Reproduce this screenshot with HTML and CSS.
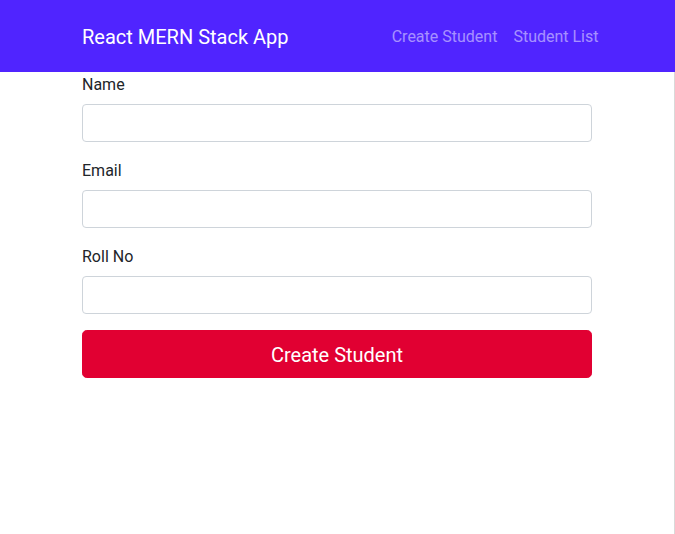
FILE: index.html
```html
<!DOCTYPE html>
<html lang="en">
<head>
<meta charset="utf-8">
<title>React MERN Stack App</title>
<link rel="stylesheet" href="styles.css">
</head>
<body>
<header class="navbar">
  <div class="nav-inner">
    <a class="brand" href="#">React MERN Stack App</a>
    <nav class="links">
      <a class="nav-link" href="#">Create Student</a>
      <a class="nav-link" href="#">Student List</a>
    </nav>
  </div>
</header>
<main class="page">
  <div class="container">
    <form class="form">
      <div class="group">
        <label class="label">Name</label>
        <input class="input" type="text">
      </div>
      <div class="group">
        <label class="label">Email</label>
        <input class="input" type="email">
      </div>
      <div class="group">
        <label class="label">Roll No</label>
        <input class="input" type="text">
      </div>
      <button class="btn" type="button">Create Student</button>
    </form>
  </div>
</main>
</body>
</html>
```
FILE: styles.css
```css
* { box-sizing: border-box; }
html, body { margin: 0; padding: 0; height: 100%; }
body {
  font-family: Roboto, "Liberation Sans", Arial, sans-serif;
  font-size: 16px;
  line-height: 1.5;
  color: #212529;
  background: #fff;
}
.navbar {
  background: #5024ff;
  height: 72px;
  display: flex;
  align-items: center;
}
.nav-inner {
  width: 540px;
  margin: 0 auto;
  display: flex;
  align-items: center;
  justify-content: space-between;
  padding-left: 14.5px;
  padding-right: 1px;
}
.brand {
  color: #fff;
  font-size: 20px;
  line-height: 30px;
  text-decoration: none;
  padding-top: 1px;
}
.links { display: flex; padding-top: 2px; }
.nav-link {
  color: rgba(255, 255, 255, 0.5);
  text-decoration: none;
  padding: 0 8px;
  line-height: 24px;
}
.page {
  height: calc(100% - 72px);
  border-right: 1px solid #d9d9d9;
}
.container {
  width: 540px;
  margin: 0 auto;
  padding: 0 15px;
}
.group { margin-bottom: 16px; }
.label {
  display: block;
  margin-bottom: 7px;
  padding-top: 1px;
  line-height: 24px;
}
.input {
  display: block;
  width: 100%;
  height: 38px;
  padding: 6px 12px;
  font: inherit;
  border: 1px solid #ced4da;
  border-radius: 4px;
  background: #fff;
}
.btn {
  display: block;
  width: 100%;
  height: 48px;
  border: 1px solid #e10032;
  background: #e10032;
  color: #fff;
  font-family: inherit;
  font-size: 20px;
  line-height: 30px;
  border-radius: 4.8px;
  padding: 9px 16px 7px;
}
```
